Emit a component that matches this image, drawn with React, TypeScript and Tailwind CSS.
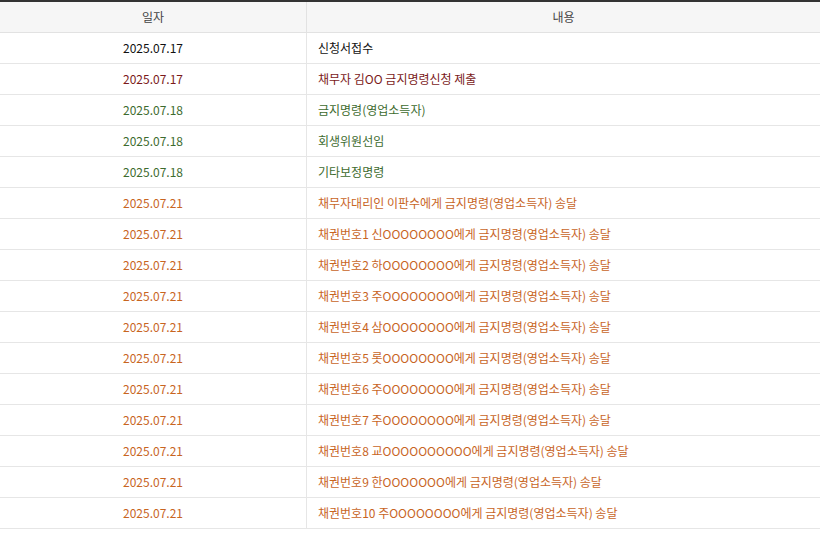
const rows: [string, string, string][] = [
  ["2025.07.17", "신청서접수", "text-[#111111]"],
  ["2025.07.17", "채무자 김OO 금지명령신청 제출", "text-[#7b1a1a]"],
  ["2025.07.18", "금지명령(영업소득자)", "text-[#3d6b2e]"],
  ["2025.07.18", "회생위원선임", "text-[#3d6b2e]"],
  ["2025.07.18", "기타보정명령", "text-[#3d6b2e]"],
  ["2025.07.21", "채무자대리인 이판수에게 금지명령(영업소득자) 송달", "text-[#c8651f]"],
  ["2025.07.21", "채권번호1 신OOOOOOOO에게 금지명령(영업소득자) 송달", "text-[#c8651f]"],
  ["2025.07.21", "채권번호2 하OOOOOOOO에게 금지명령(영업소득자) 송달", "text-[#c8651f]"],
  ["2025.07.21", "채권번호3 주OOOOOOOO에게 금지명령(영업소득자) 송달", "text-[#c8651f]"],
  ["2025.07.21", "채권번호4 삼OOOOOOOO에게 금지명령(영업소득자) 송달", "text-[#c8651f]"],
  ["2025.07.21", "채권번호5 롯OOOOOOOO에게 금지명령(영업소득자) 송달", "text-[#c8651f]"],
  ["2025.07.21", "채권번호6 주OOOOOOOO에게 금지명령(영업소득자) 송달", "text-[#c8651f]"],
  ["2025.07.21", "채권번호7 주OOOOOOOO에게 금지명령(영업소득자) 송달", "text-[#c8651f]"],
  ["2025.07.21", "채권번호8 교OOOOOOOOOO에게 금지명령(영업소득자) 송달", "text-[#c8651f]"],
  ["2025.07.21", "채권번호9 한OOOOOOO에게 금지명령(영업소득자) 송달", "text-[#c8651f]"],
  ["2025.07.21", "채권번호10 주OOOOOOOO에게 금지명령(영업소득자) 송달", "text-[#c8651f]"],
];

export default function App() {
  return (
    <div className="w-[820px] h-[534px] overflow-hidden bg-white text-[12px]" style={{ fontFamily: '"Noto Sans CJK KR", "Noto Sans", sans-serif' }}>
      <div className="border-t-2 border-[#333333]">
        <div className="grid grid-cols-[307px_1fr] h-[31px] bg-[#f6f6f6] border-b border-[#e2e2e2] text-[#444444]">
          <div className="flex items-center justify-center border-r border-[#e2e2e2]">일자</div>
          <div className="flex items-center justify-center">내용</div>
        </div>
        {rows.map(([d, c, col], i) => (
          <div key={i} className={`grid grid-cols-[307px_1fr] h-[31px] border-b border-[#e6e6e6] ${col}`}>
            <div className="flex items-center justify-center border-r border-[#e6e6e6]">{d}</div>
            <div className="flex items-center pl-[11px]">{c}</div>
          </div>
        ))}
      </div>
    </div>
  );
}
